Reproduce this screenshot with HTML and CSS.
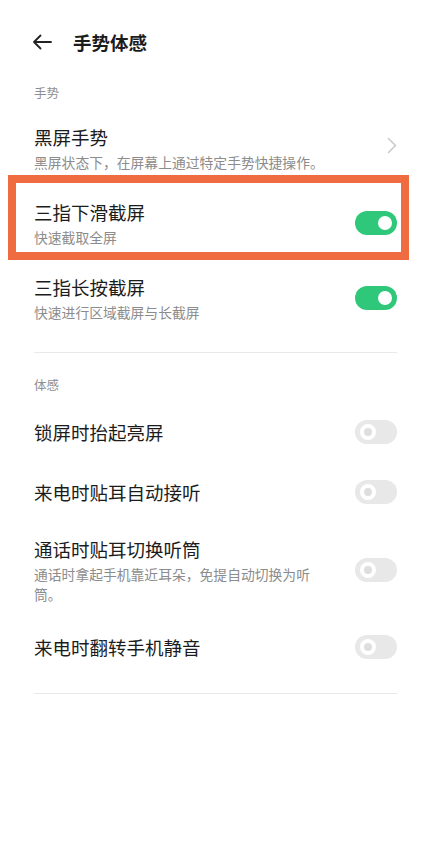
FILE: index.html
```html
<!DOCTYPE html>
<html lang="zh-CN">
<head>
    <meta charset="UTF-8">
    <meta name="viewport" content="width=device-width, initial-scale=1.0">
    <title>手势体感</title>
    <link rel="stylesheet" href="styles.css">
</head>
<body>
    <div class="header">
        <svg class="back" width="20" height="16" viewBox="0 0 20 16">
            <path d="M19 8H2M8.5 1.5L2 8l6.5 6.5" fill="none" stroke="#222" stroke-width="1.8" stroke-linecap="round" stroke-linejoin="round"/>
        </svg>
        <h1>手势体感</h1>
    </div>

    <div class="section-label">手势</div>
    <div class="row">
        <div class="text">
            <div class="title">黑屏手势</div>
            <div class="sub">黑屏状态下，在屏幕上通过特定手势快捷操作。</div>
        </div>
        <svg class="chevron" width="10" height="17" viewBox="0 0 10 17">
            <path d="M1.5 1.5l7 7-7 7" fill="none" stroke="#c9c9c9" stroke-width="1.5" stroke-linecap="round" stroke-linejoin="round"/>
        </svg>
    </div>
    <div class="row highlight">
        <div class="text">
            <div class="title">三指下滑截屏</div>
            <div class="sub">快速截取全屏</div>
        </div>
        <span class="switch on"></span>
    </div>
    <div class="row">
        <div class="text">
            <div class="title">三指长按截屏</div>
            <div class="sub">快速进行区域截屏与长截屏</div>
        </div>
        <span class="switch on"></span>
    </div>
    <div class="divider first"></div>

    <div class="section-label second">体感</div>
    <div class="row single">
        <div class="text">
            <div class="title">锁屏时抬起亮屏</div>
        </div>
        <span class="switch"></span>
    </div>
    <div class="row single">
        <div class="text">
            <div class="title">来电时贴耳自动接听</div>
        </div>
        <span class="switch"></span>
    </div>
    <div class="row">
        <div class="text">
            <div class="title">通话时贴耳切换听筒</div>
            <div class="sub">通话时拿起手机靠近耳朵，免提自动切换为听筒。</div>
        </div>
        <span class="switch"></span>
    </div>
    <div class="row single">
        <div class="text">
            <div class="title">来电时翻转手机静音</div>
        </div>
        <span class="switch"></span>
    </div>
    <div class="divider last"></div>
</body>
</html>
```

FILE: styles.css
```css
body {
    font-family: "Noto Sans CJK SC", "Noto Sans", sans-serif;
    background: #ffffff;
    color: #1c1c1c;
    margin: 0;
    padding: 0;
}
.header {
    height: 84px;
    display: flex;
    align-items: center;
    padding-left: 32px;
    gap: 21px;
}
.header h1 {
    margin: 0;
    font-size: 18.5px;
    font-weight: 700;
    line-height: 26px;
}
.section-label {
    padding-left: 34px;
    font-size: 12.5px;
    line-height: 18px;
    color: #8e8e8e;
    margin-bottom: 8px;
}
.section-label.second {
    margin-top: 23px;
}
.row {
    display: flex;
    align-items: center;
    justify-content: space-between;
    gap: 36px;
    padding: 14px 31px 13px 34px;
}
.row.single {
    padding-top: 17px;
    padding-bottom: 17px;
}
.row.highlight {
    position: relative;
}
.row.highlight::after {
    content: '';
    position: absolute;
    top: -10px;
    bottom: 0;
    left: 8px;
    right: 19px;
    border: 8px solid #ef6b40;
}
.text {
    flex: 1;
}
.title {
    font-size: 18.5px;
    line-height: 26px;
}
.sub {
    font-size: 13.8px;
    line-height: 20px;
    color: #8c8c8c;
    margin-top: 2px;
}
.chevron {
    flex-shrink: 0;
    margin-top: -6px;
}
.switch {
    flex-shrink: 0;
    position: relative;
    width: 42px;
    height: 24px;
    border-radius: 12px;
    background: #e8e8e8;
}
.switch::after {
    content: '';
    position: absolute;
    top: 4px;
    left: 5px;
    width: 8px;
    height: 8px;
    border-radius: 50%;
    background: #dedede;
    border: 4px solid #ffffff;
}
.switch.on {
    background: #2fc87a;
}
.switch.on::after {
    left: auto;
    right: 5px;
    top: 5px;
    width: 14px;
    height: 14px;
    border: none;
    background: #ffffff;
}
.divider {
    height: 1px;
    background: #e9e9e9;
    margin: 0 31px 0 34px;
}
.divider.first {
    margin-top: 17px;
}
.divider.last {
    margin-top: 16px;
}
```
